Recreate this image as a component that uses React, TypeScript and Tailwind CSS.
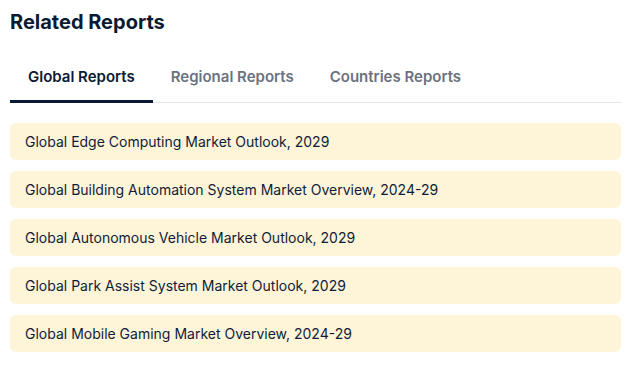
import React from "react";

const tabs = ["Global Reports", "Regional Reports", "Countries Reports"];
const reports = [
  "Global Edge Computing Market Outlook, 2029",
  "Global Building Automation System Market Overview, 2024-29",
  "Global Autonomous Vehicle Market Outlook, 2029",
  "Global Park Assist System Market Outlook, 2029",
  "Global Mobile Gaming Market Overview, 2024-29",
];

export default function App() {
  return (
    <div className="bg-white w-[631px] h-[366px] px-[10px] pt-[8px]" style={{ fontFamily: "Inter, 'Noto Sans', sans-serif" }}>
      <h2 className="text-[20px] leading-[28px] font-bold text-[#0b1a33]">Related Reports</h2>
      <div className="mt-[30px] flex border-b border-[#e5e7eb] w-[611px]">
        {tabs.map((t, i) => (
          <div
            key={t}
            className={
              "px-[18px] pb-[12px] text-[15px] leading-[22px] font-semibold -mb-px " +
              (i === 0 ? "text-[#0b1a33] border-b-[3px] border-[#0b1a33]" : "text-[#6b7280] border-b-[3px] border-transparent")
            }
          >
            {t}
          </div>
        ))}
      </div>
      <div className="mt-[20px] flex flex-col gap-[11px] w-[611px]">
        {reports.map((r) => (
          <div key={r} className="bg-[#fef4d8] rounded-[6px] h-[37px] flex items-center px-[15px] text-[14px] text-[#0f1d3a]">
            {r}
          </div>
        ))}
      </div>
    </div>
  );
}
